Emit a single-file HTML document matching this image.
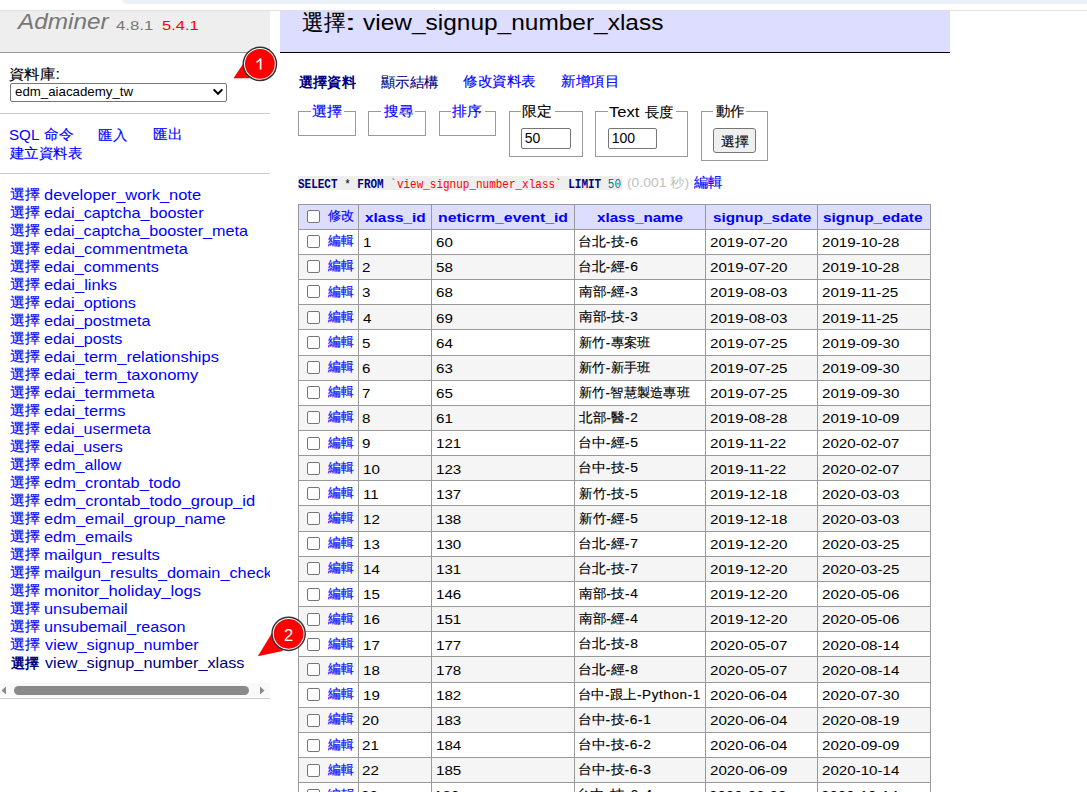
<!DOCTYPE html>
<html><head><meta charset="utf-8"><style>
html,body{margin:0;padding:0;background:#fff;width:1087px;height:792px;overflow:hidden;position:relative}
.t{position:absolute;white-space:pre;transform-origin:0 0}

</style></head><body>
<div style="position:absolute;left:122px;top:-6px;width:1100px;height:10px;background:#ecf0f9;border-radius:8px"></div>
<div style="position:absolute;left:0px;top:10px;width:1087px;height:1px;background:#dfe0df"></div>
<div style="position:absolute;left:0px;top:11px;width:270px;height:41px;background:#eee"></div>
<div style="position:absolute;left:0px;top:52px;width:270px;height:1px;background:#999"></div>
<span id="t0" class="t" style="left:17.84px;top:10.95px;font-size:22.5px;line-height:22.5px;color:#777;font-weight:normal;font-style:italic;font-family:'Liberation Sans',sans-serif;transform:scaleX(1.0824);">Adminer</span>
<span id="t1" class="t" style="left:115.66px;top:18.80px;font-size:13px;line-height:13px;color:#777;font-weight:normal;font-style:normal;font-family:'Liberation Sans',sans-serif;transform:scaleX(1.2893);">4.8.1</span>
<span id="t2" class="t" style="left:161.79px;top:18.80px;font-size:13px;line-height:13px;color:#f00;font-weight:normal;font-style:normal;font-family:'Liberation Sans',sans-serif;transform:scaleX(1.2679);">5.4.1</span>
<span id="t3" class="t" style="left:9.34px;top:66.81px;font-size:14.4px;line-height:14.4px;color:#000;font-weight:normal;font-style:normal;font-family:'Liberation Sans',sans-serif;-webkit-text-stroke:0.15px #000;transform:scaleX(1.1047);">資料庫:</span>
<div style="position:absolute;left:10px;top:83px;width:215px;height:17px;border:1px solid #767676;border-radius:2px;background:#fff"></div>
<span id="t4" class="t" style="left:15.20px;top:84.72px;font-size:13.33px;line-height:13.33px;color:#000;font-weight:normal;font-style:normal;font-family:'Liberation Sans',sans-serif;transform:scaleX(0.9966);">edm_aiacademy_tw</span>
<svg style="position:absolute;left:212px;top:88px" width="12" height="8" viewBox="0 0 12 8"><path d="M1.6 1.4 L6 5.8 L10.4 1.4" fill="none" stroke="#000" stroke-width="2"/></svg>
<div style="position:absolute;left:0px;top:113px;width:270px;height:1px;background:#ccc"></div>
<span id="t5" class="t" style="left:9.28px;top:127.30px;font-size:15px;line-height:15px;color:#00f;font-weight:normal;font-style:normal;font-family:'Liberation Sans',sans-serif;transform:scaleX(1.0107);">SQL</span>
<span id="t6" class="t" style="left:43.84px;top:127.31px;font-size:14.4px;line-height:14.4px;color:#00f;font-weight:normal;font-style:normal;font-family:'Liberation Sans',sans-serif;-webkit-text-stroke:0.15px #00f;transform:scaleX(1.0423);">命令</span>
<span id="t7" class="t" style="left:98.24px;top:128.31px;font-size:14.4px;line-height:14.4px;color:#00f;font-weight:normal;font-style:normal;font-family:'Liberation Sans',sans-serif;-webkit-text-stroke:0.15px #00f;transform:scaleX(1.0423);">匯入</span>
<span id="t8" class="t" style="left:152.76px;top:127.31px;font-size:14.4px;line-height:14.4px;color:#00f;font-weight:normal;font-style:normal;font-family:'Liberation Sans',sans-serif;-webkit-text-stroke:0.15px #00f;transform:scaleX(1.0440);">匯出</span>
<span id="t9" class="t" style="left:10.28px;top:145.71px;font-size:14.4px;line-height:14.4px;color:#00f;font-weight:normal;font-style:normal;font-family:'Liberation Sans',sans-serif;-webkit-text-stroke:0.15px #00f;transform:scaleX(1.0319);">建立資料表</span>
<div style="position:absolute;left:0px;top:173px;width:270px;height:1px;background:#ccc"></div>
<div style="position:absolute;left:0;top:174px;width:270px;height:524px;overflow:hidden">
<span id="t10" class="t" style="left:10.05px;top:13.31px;font-size:14.4px;line-height:14.4px;color:#00f;font-weight:normal;font-style:normal;font-family:'Liberation Sans',sans-serif;-webkit-text-stroke:0.15px #00f;transform:scaleX(1.0731);">選擇</span>
<span id="t11" class="t" style="left:43.70px;top:12.80px;font-size:15px;line-height:15px;color:#00f;font-weight:normal;font-style:normal;font-family:'Liberation Sans',sans-serif;transform:scaleX(1.0951);">developer_work_note</span>
<span id="t12" class="t" style="left:10.05px;top:31.31px;font-size:14.4px;line-height:14.4px;color:#00f;font-weight:normal;font-style:normal;font-family:'Liberation Sans',sans-serif;-webkit-text-stroke:0.15px #00f;transform:scaleX(1.0731);">選擇</span>
<span id="t13" class="t" style="left:43.72px;top:30.80px;font-size:15px;line-height:15px;color:#00f;font-weight:normal;font-style:normal;font-family:'Liberation Sans',sans-serif;transform:scaleX(1.0808);">edai_captcha_booster</span>
<span id="t14" class="t" style="left:10.05px;top:49.31px;font-size:14.4px;line-height:14.4px;color:#00f;font-weight:normal;font-style:normal;font-family:'Liberation Sans',sans-serif;-webkit-text-stroke:0.15px #00f;transform:scaleX(1.0731);">選擇</span>
<span id="t15" class="t" style="left:43.72px;top:48.80px;font-size:15px;line-height:15px;color:#00f;font-weight:normal;font-style:normal;font-family:'Liberation Sans',sans-serif;transform:scaleX(1.0778);">edai_captcha_booster_meta</span>
<span id="t16" class="t" style="left:10.05px;top:67.31px;font-size:14.4px;line-height:14.4px;color:#00f;font-weight:normal;font-style:normal;font-family:'Liberation Sans',sans-serif;-webkit-text-stroke:0.15px #00f;transform:scaleX(1.0731);">選擇</span>
<span id="t17" class="t" style="left:43.71px;top:66.80px;font-size:15px;line-height:15px;color:#00f;font-weight:normal;font-style:normal;font-family:'Liberation Sans',sans-serif;transform:scaleX(1.0916);">edai_commentmeta</span>
<span id="t18" class="t" style="left:10.05px;top:85.31px;font-size:14.4px;line-height:14.4px;color:#00f;font-weight:normal;font-style:normal;font-family:'Liberation Sans',sans-serif;-webkit-text-stroke:0.15px #00f;transform:scaleX(1.0731);">選擇</span>
<span id="t19" class="t" style="left:43.72px;top:84.80px;font-size:15px;line-height:15px;color:#00f;font-weight:normal;font-style:normal;font-family:'Liberation Sans',sans-serif;transform:scaleX(1.0838);">edai_comments</span>
<span id="t20" class="t" style="left:10.05px;top:103.31px;font-size:14.4px;line-height:14.4px;color:#00f;font-weight:normal;font-style:normal;font-family:'Liberation Sans',sans-serif;-webkit-text-stroke:0.15px #00f;transform:scaleX(1.0731);">選擇</span>
<span id="t21" class="t" style="left:43.71px;top:102.80px;font-size:15px;line-height:15px;color:#00f;font-weight:normal;font-style:normal;font-family:'Liberation Sans',sans-serif;transform:scaleX(1.0938);">edai_links</span>
<span id="t22" class="t" style="left:10.05px;top:121.31px;font-size:14.4px;line-height:14.4px;color:#00f;font-weight:normal;font-style:normal;font-family:'Liberation Sans',sans-serif;-webkit-text-stroke:0.15px #00f;transform:scaleX(1.0731);">選擇</span>
<span id="t23" class="t" style="left:43.72px;top:120.80px;font-size:15px;line-height:15px;color:#00f;font-weight:normal;font-style:normal;font-family:'Liberation Sans',sans-serif;transform:scaleX(1.0810);">edai_options</span>
<span id="t24" class="t" style="left:10.05px;top:139.31px;font-size:14.4px;line-height:14.4px;color:#00f;font-weight:normal;font-style:normal;font-family:'Liberation Sans',sans-serif;-webkit-text-stroke:0.15px #00f;transform:scaleX(1.0731);">選擇</span>
<span id="t25" class="t" style="left:43.72px;top:138.80px;font-size:15px;line-height:15px;color:#00f;font-weight:normal;font-style:normal;font-family:'Liberation Sans',sans-serif;transform:scaleX(1.0837);">edai_postmeta</span>
<span id="t26" class="t" style="left:10.05px;top:157.31px;font-size:14.4px;line-height:14.4px;color:#00f;font-weight:normal;font-style:normal;font-family:'Liberation Sans',sans-serif;-webkit-text-stroke:0.15px #00f;transform:scaleX(1.0731);">選擇</span>
<span id="t27" class="t" style="left:43.72px;top:156.80px;font-size:15px;line-height:15px;color:#00f;font-weight:normal;font-style:normal;font-family:'Liberation Sans',sans-serif;transform:scaleX(1.0803);">edai_posts</span>
<span id="t28" class="t" style="left:10.05px;top:175.31px;font-size:14.4px;line-height:14.4px;color:#00f;font-weight:normal;font-style:normal;font-family:'Liberation Sans',sans-serif;-webkit-text-stroke:0.15px #00f;transform:scaleX(1.0731);">選擇</span>
<span id="t29" class="t" style="left:43.70px;top:174.80px;font-size:15px;line-height:15px;color:#00f;font-weight:normal;font-style:normal;font-family:'Liberation Sans',sans-serif;transform:scaleX(1.0981);">edai_term_relationships</span>
<span id="t30" class="t" style="left:10.05px;top:193.31px;font-size:14.4px;line-height:14.4px;color:#00f;font-weight:normal;font-style:normal;font-family:'Liberation Sans',sans-serif;-webkit-text-stroke:0.15px #00f;transform:scaleX(1.0731);">選擇</span>
<span id="t31" class="t" style="left:43.70px;top:192.80px;font-size:15px;line-height:15px;color:#00f;font-weight:normal;font-style:normal;font-family:'Liberation Sans',sans-serif;transform:scaleX(1.1022);">edai_term_taxonomy</span>
<span id="t32" class="t" style="left:10.05px;top:211.31px;font-size:14.4px;line-height:14.4px;color:#00f;font-weight:normal;font-style:normal;font-family:'Liberation Sans',sans-serif;-webkit-text-stroke:0.15px #00f;transform:scaleX(1.0731);">選擇</span>
<span id="t33" class="t" style="left:43.69px;top:210.80px;font-size:15px;line-height:15px;color:#00f;font-weight:normal;font-style:normal;font-family:'Liberation Sans',sans-serif;transform:scaleX(1.1061);">edai_termmeta</span>
<span id="t34" class="t" style="left:10.05px;top:229.31px;font-size:14.4px;line-height:14.4px;color:#00f;font-weight:normal;font-style:normal;font-family:'Liberation Sans',sans-serif;-webkit-text-stroke:0.15px #00f;transform:scaleX(1.0731);">選擇</span>
<span id="t35" class="t" style="left:43.70px;top:228.80px;font-size:15px;line-height:15px;color:#00f;font-weight:normal;font-style:normal;font-family:'Liberation Sans',sans-serif;transform:scaleX(1.1000);">edai_terms</span>
<span id="t36" class="t" style="left:10.05px;top:247.31px;font-size:14.4px;line-height:14.4px;color:#00f;font-weight:normal;font-style:normal;font-family:'Liberation Sans',sans-serif;-webkit-text-stroke:0.15px #00f;transform:scaleX(1.0731);">選擇</span>
<span id="t37" class="t" style="left:43.72px;top:246.80px;font-size:15px;line-height:15px;color:#00f;font-weight:normal;font-style:normal;font-family:'Liberation Sans',sans-serif;transform:scaleX(1.0758);">edai_usermeta</span>
<span id="t38" class="t" style="left:10.05px;top:265.31px;font-size:14.4px;line-height:14.4px;color:#00f;font-weight:normal;font-style:normal;font-family:'Liberation Sans',sans-serif;-webkit-text-stroke:0.15px #00f;transform:scaleX(1.0731);">選擇</span>
<span id="t39" class="t" style="left:43.73px;top:264.80px;font-size:15px;line-height:15px;color:#00f;font-weight:normal;font-style:normal;font-family:'Liberation Sans',sans-serif;transform:scaleX(1.0722);">edai_users</span>
<span id="t40" class="t" style="left:10.05px;top:283.31px;font-size:14.4px;line-height:14.4px;color:#00f;font-weight:normal;font-style:normal;font-family:'Liberation Sans',sans-serif;-webkit-text-stroke:0.15px #00f;transform:scaleX(1.0731);">選擇</span>
<span id="t41" class="t" style="left:43.72px;top:282.80px;font-size:15px;line-height:15px;color:#00f;font-weight:normal;font-style:normal;font-family:'Liberation Sans',sans-serif;transform:scaleX(1.0775);">edm_allow</span>
<span id="t42" class="t" style="left:10.05px;top:301.31px;font-size:14.4px;line-height:14.4px;color:#00f;font-weight:normal;font-style:normal;font-family:'Liberation Sans',sans-serif;-webkit-text-stroke:0.15px #00f;transform:scaleX(1.0731);">選擇</span>
<span id="t43" class="t" style="left:43.71px;top:300.80px;font-size:15px;line-height:15px;color:#00f;font-weight:normal;font-style:normal;font-family:'Liberation Sans',sans-serif;transform:scaleX(1.0927);">edm_crontab_todo</span>
<span id="t44" class="t" style="left:10.05px;top:319.31px;font-size:14.4px;line-height:14.4px;color:#00f;font-weight:normal;font-style:normal;font-family:'Liberation Sans',sans-serif;-webkit-text-stroke:0.15px #00f;transform:scaleX(1.0731);">選擇</span>
<span id="t45" class="t" style="left:43.70px;top:318.80px;font-size:15px;line-height:15px;color:#00f;font-weight:normal;font-style:normal;font-family:'Liberation Sans',sans-serif;transform:scaleX(1.1005);">edm_crontab_todo_group_id</span>
<span id="t46" class="t" style="left:10.05px;top:337.31px;font-size:14.4px;line-height:14.4px;color:#00f;font-weight:normal;font-style:normal;font-family:'Liberation Sans',sans-serif;-webkit-text-stroke:0.15px #00f;transform:scaleX(1.0731);">選擇</span>
<span id="t47" class="t" style="left:43.71px;top:336.80px;font-size:15px;line-height:15px;color:#00f;font-weight:normal;font-style:normal;font-family:'Liberation Sans',sans-serif;transform:scaleX(1.0939);">edm_email_group_name</span>
<span id="t48" class="t" style="left:10.05px;top:355.31px;font-size:14.4px;line-height:14.4px;color:#00f;font-weight:normal;font-style:normal;font-family:'Liberation Sans',sans-serif;-webkit-text-stroke:0.15px #00f;transform:scaleX(1.0731);">選擇</span>
<span id="t49" class="t" style="left:43.71px;top:354.80px;font-size:15px;line-height:15px;color:#00f;font-weight:normal;font-style:normal;font-family:'Liberation Sans',sans-serif;transform:scaleX(1.0937);">edm_emails</span>
<span id="t50" class="t" style="left:10.05px;top:373.31px;font-size:14.4px;line-height:14.4px;color:#00f;font-weight:normal;font-style:normal;font-family:'Liberation Sans',sans-serif;-webkit-text-stroke:0.15px #00f;transform:scaleX(1.0731);">選擇</span>
<span id="t51" class="t" style="left:43.70px;top:372.80px;font-size:15px;line-height:15px;color:#00f;font-weight:normal;font-style:normal;font-family:'Liberation Sans',sans-serif;transform:scaleX(1.1029);">mailgun_results</span>
<span id="t52" class="t" style="left:10.05px;top:391.31px;font-size:14.4px;line-height:14.4px;color:#00f;font-weight:normal;font-style:normal;font-family:'Liberation Sans',sans-serif;-webkit-text-stroke:0.15px #00f;transform:scaleX(1.0731);">選擇</span>
<span id="t53" class="t" style="left:44.00px;top:390.80px;font-size:15px;line-height:15px;color:#00f;font-weight:normal;font-style:normal;font-family:'Liberation Sans',sans-serif;transform:scaleX(1.0850);">mailgun_results_domain_check</span>
<span id="t54" class="t" style="left:10.05px;top:409.31px;font-size:14.4px;line-height:14.4px;color:#00f;font-weight:normal;font-style:normal;font-family:'Liberation Sans',sans-serif;-webkit-text-stroke:0.15px #00f;transform:scaleX(1.0731);">選擇</span>
<span id="t55" class="t" style="left:43.69px;top:408.80px;font-size:15px;line-height:15px;color:#00f;font-weight:normal;font-style:normal;font-family:'Liberation Sans',sans-serif;transform:scaleX(1.1071);">monitor_holiday_logs</span>
<span id="t56" class="t" style="left:10.05px;top:427.31px;font-size:14.4px;line-height:14.4px;color:#00f;font-weight:normal;font-style:normal;font-family:'Liberation Sans',sans-serif;-webkit-text-stroke:0.15px #00f;transform:scaleX(1.0731);">選擇</span>
<span id="t57" class="t" style="left:43.71px;top:426.80px;font-size:15px;line-height:15px;color:#00f;font-weight:normal;font-style:normal;font-family:'Liberation Sans',sans-serif;transform:scaleX(1.0907);">unsubemail</span>
<span id="t58" class="t" style="left:10.05px;top:445.31px;font-size:14.4px;line-height:14.4px;color:#00f;font-weight:normal;font-style:normal;font-family:'Liberation Sans',sans-serif;-webkit-text-stroke:0.15px #00f;transform:scaleX(1.0731);">選擇</span>
<span id="t59" class="t" style="left:43.72px;top:444.80px;font-size:15px;line-height:15px;color:#00f;font-weight:normal;font-style:normal;font-family:'Liberation Sans',sans-serif;transform:scaleX(1.0806);">unsubemail_reason</span>
<span id="t60" class="t" style="left:10.05px;top:463.31px;font-size:14.4px;line-height:14.4px;color:#00f;font-weight:normal;font-style:normal;font-family:'Liberation Sans',sans-serif;-webkit-text-stroke:0.15px #00f;transform:scaleX(1.0731);">選擇</span>
<span id="t61" class="t" style="left:44.80px;top:462.80px;font-size:15px;line-height:15px;color:#00f;font-weight:normal;font-style:normal;font-family:'Liberation Sans',sans-serif;transform:scaleX(1.0838);">view_signup_number</span>
<span id="t62" class="t" style="left:11.10px;top:482.31px;font-size:14.4px;line-height:14.4px;color:#000080;font-weight:bold;font-style:normal;font-family:'Liberation Sans',sans-serif;transform:scaleX(0.9964);">選擇</span>
<span id="t63" class="t" style="left:44.80px;top:480.80px;font-size:15px;line-height:15px;color:#000080;font-weight:normal;font-style:normal;font-family:'Liberation Sans',sans-serif;transform:scaleX(1.0826);">view_signup_number_xlass</span>
<div style="position:absolute;left:0px;top:509px;width:270px;height:14px;background:#f9f9f9"></div>
<div style="position:absolute;left:14px;top:512px;width:235px;height:9px;background:#8a8a8a;border-radius:5px"></div>
<svg style="position:absolute;left:0;top:512px" width="270" height="9" viewBox="0 0 270 9"><path d="M1.5 4.5 L6 0.5 L6 8.5 Z" fill="#8a8a8a"/><path d="M264.5 4.5 L260 0.5 L260 8.5 Z" fill="#8a8a8a"/></svg>
</div>
<div style="position:absolute;left:0px;top:698px;width:270px;height:1px;background:#ccc"></div>
<div style="position:absolute;left:280px;top:11px;width:670px;height:41px;background:#ddf"></div>
<div style="position:absolute;left:280px;top:52px;width:670px;height:1px;background:#000"></div>
<span id="t64" class="t" style="left:301.52px;top:12.12px;font-size:21.6px;line-height:21.6px;color:#000;font-weight:normal;font-style:normal;font-family:'Liberation Sans',sans-serif;-webkit-text-stroke:0.15px #000;transform:scaleX(0.9833);">選擇</span>
<span id="t65" class="t" style="left:344.30px;top:11.95px;font-size:22.5px;line-height:22.5px;color:#000;font-weight:normal;font-style:normal;font-family:'Liberation Sans',sans-serif;transform:scaleX(2.0500);">:</span>
<span id="t66" class="t" style="left:362.96px;top:11.95px;font-size:22.5px;line-height:22.5px;color:#000;font-weight:normal;font-style:normal;font-family:'Liberation Sans',sans-serif;transform:scaleX(1.0869);">view_signup_number_xlass</span>
<span id="t67" class="t" style="left:298.90px;top:74.91px;font-size:14.4px;line-height:14.4px;color:#000080;font-weight:bold;font-style:normal;font-family:'Liberation Sans',sans-serif;transform:scaleX(1.0143);">選擇資料</span>
<span id="t68" class="t" style="left:381.20px;top:75.31px;font-size:14.4px;line-height:14.4px;color:#000080;font-weight:normal;font-style:normal;font-family:'Liberation Sans',sans-serif;-webkit-text-stroke:0.15px #000080;transform:scaleX(1.0232);">顯示結構</span>
<span id="t69" class="t" style="left:463.36px;top:74.31px;font-size:14.4px;line-height:14.4px;color:#00f;font-weight:normal;font-style:normal;font-family:'Liberation Sans',sans-serif;-webkit-text-stroke:0.15px #00f;transform:scaleX(1.0397);">修改資料表</span>
<span id="t70" class="t" style="left:561.30px;top:74.31px;font-size:14.4px;line-height:14.4px;color:#00f;font-weight:normal;font-style:normal;font-family:'Liberation Sans',sans-serif;-webkit-text-stroke:0.15px #00f;transform:scaleX(1.0377);">新增項目</span>
<div style="position:absolute;left:298px;top:111px;width:56px;height:23px;border:1px solid #999"></div>
<div style="position:absolute;left:310.5px;top:109px;width:33.5px;height:5px;background:#fff"></div>
<div style="position:absolute;left:368px;top:111px;width:56px;height:23px;border:1px solid #999"></div>
<div style="position:absolute;left:381px;top:109px;width:33.5px;height:5px;background:#fff"></div>
<div style="position:absolute;left:439px;top:111px;width:55px;height:23px;border:1px solid #999"></div>
<div style="position:absolute;left:450.5px;top:109px;width:34.0px;height:5px;background:#fff"></div>
<div style="position:absolute;left:509px;top:111px;width:72px;height:44px;border:1px solid #999"></div>
<div style="position:absolute;left:521px;top:109px;width:33.5px;height:5px;background:#fff"></div>
<div style="position:absolute;left:595px;top:111px;width:91px;height:44px;border:1px solid #999"></div>
<div style="position:absolute;left:608px;top:109px;width:68px;height:5px;background:#fff"></div>
<div style="position:absolute;left:701px;top:111px;width:65px;height:48px;border:1px solid #999"></div>
<div style="position:absolute;left:712.7px;top:109px;width:33.59999999999991px;height:5px;background:#fff"></div>
<span id="t71" class="t" style="left:312.12px;top:104.11px;font-size:14.4px;line-height:14.4px;color:#00f;font-weight:normal;font-style:normal;font-family:'Liberation Sans',sans-serif;-webkit-text-stroke:0.15px #00f;transform:scaleX(1.0808);">選擇</span>
<span id="t72" class="t" style="left:383.60px;top:104.11px;font-size:14.4px;line-height:14.4px;color:#00f;font-weight:normal;font-style:normal;font-family:'Liberation Sans',sans-serif;-webkit-text-stroke:0.15px #00f;transform:scaleX(1.0407);">搜尋</span>
<span id="t73" class="t" style="left:452.37px;top:104.11px;font-size:14.4px;line-height:14.4px;color:#00f;font-weight:normal;font-style:normal;font-family:'Liberation Sans',sans-serif;-webkit-text-stroke:0.15px #00f;transform:scaleX(1.0593);">排序</span>
<span id="t74" class="t" style="left:522.10px;top:103.91px;font-size:14.4px;line-height:14.4px;color:#000;font-weight:normal;font-style:normal;font-family:'Liberation Sans',sans-serif;-webkit-text-stroke:0.15px #000;transform:scaleX(1.0692);">限定</span>
<span id="t75" class="t" style="left:609.35px;top:103.80px;font-size:15px;line-height:15px;color:#000;font-weight:normal;font-style:normal;font-family:'Liberation Sans',sans-serif;transform:scaleX(1.1037);">Text</span>
<span id="t76" class="t" style="left:645.39px;top:104.71px;font-size:14.4px;line-height:14.4px;color:#000;font-weight:normal;font-style:normal;font-family:'Liberation Sans',sans-serif;-webkit-text-stroke:0.15px #000;transform:scaleX(1.0148);">長度</span>
<span id="t77" class="t" style="left:715.60px;top:103.91px;font-size:14.4px;line-height:14.4px;color:#000;font-weight:normal;font-style:normal;font-family:'Liberation Sans',sans-serif;-webkit-text-stroke:0.15px #000;transform:scaleX(1.0333);">動作</span>
<div style="position:absolute;left:521px;top:128px;width:48px;height:19px;border:1px solid #767676;border-radius:2px;background:#fff"></div>
<span id="t78" class="t" style="left:524.80px;top:131.15px;font-size:14px;line-height:14px;color:#000;font-weight:normal;font-style:normal;font-family:'Liberation Sans',sans-serif;">50</span>
<div style="position:absolute;left:608px;top:128px;width:47px;height:19px;border:1px solid #767676;border-radius:2px;background:#fff"></div>
<span id="t79" class="t" style="left:611.70px;top:131.15px;font-size:14px;line-height:14px;color:#000;font-weight:normal;font-style:normal;font-family:'Liberation Sans',sans-serif;">100</span>
<div style="position:absolute;left:713px;top:128px;width:41px;height:23px;border:1px solid #767676;border-radius:3px;background:#efefef"></div>
<span id="t80" class="t" style="left:720.63px;top:135.22px;font-size:13.33px;line-height:13.33px;color:#000;font-weight:normal;font-style:normal;font-family:'Liberation Sans',sans-serif;-webkit-text-stroke:0.15px #000;transform:scaleX(1.0667);">選擇</span>
<div style="position:absolute;left:298px;top:176px;width:324px;height:14px;background:#eee"></div>
<span id="t81" class="t" style="left:298.45px;top:178.65px;font-size:12.2px;line-height:12.2px;color:#000;font-weight:normal;font-style:normal;font-family:'Liberation Mono',monospace;transform:scaleX(0.9011);"><b style="color:#000080">SELECT</b> * <b style="color:#000080">FROM</b> <span style="color:#f00">`view_signup_number_xlass`</span> <b style="color:#000080">LIMIT</b> <span style="color:#008080">50</span></span>
<span id="t82" class="t" style="left:626.75px;top:176.63px;font-size:12.6px;line-height:12.6px;color:#c0c0c0;font-weight:normal;font-style:normal;font-family:'Liberation Sans',sans-serif;transform:scaleX(1.1018);">(0.001 秒)</span>
<span id="t83" class="t" style="left:693.99px;top:174.55px;font-size:14px;line-height:14px;color:#00f;font-weight:normal;font-style:normal;font-family:'Liberation Sans',sans-serif;-webkit-text-stroke:0.15px #00f;transform:scaleX(1.0185);">編輯</span>
<div style="position:absolute;left:299px;top:205px;width:631px;height:24px;background:#ddf"></div>
<div style="position:absolute;left:299px;top:255px;width:631px;height:24px;background:#f5f5f5"></div>
<div style="position:absolute;left:299px;top:305px;width:631px;height:24px;background:#f5f5f5"></div>
<div style="position:absolute;left:299px;top:356px;width:631px;height:24px;background:#f5f5f5"></div>
<div style="position:absolute;left:299px;top:406px;width:631px;height:24px;background:#f5f5f5"></div>
<div style="position:absolute;left:299px;top:456px;width:631px;height:24px;background:#f5f5f5"></div>
<div style="position:absolute;left:299px;top:506px;width:631px;height:25px;background:#f5f5f5"></div>
<div style="position:absolute;left:299px;top:557px;width:631px;height:24px;background:#f5f5f5"></div>
<div style="position:absolute;left:299px;top:607px;width:631px;height:24px;background:#f5f5f5"></div>
<div style="position:absolute;left:299px;top:657px;width:631px;height:25px;background:#f5f5f5"></div>
<div style="position:absolute;left:299px;top:708px;width:631px;height:24px;background:#f5f5f5"></div>
<div style="position:absolute;left:299px;top:758px;width:631px;height:24px;background:#f5f5f5"></div>
<div style="position:absolute;left:298px;top:204px;width:633px;height:1px;background:#999"></div>
<div style="position:absolute;left:298px;top:229px;width:633px;height:1px;background:#999"></div>
<div style="position:absolute;left:298px;top:254px;width:633px;height:1px;background:#999"></div>
<div style="position:absolute;left:298px;top:279px;width:633px;height:1px;background:#999"></div>
<div style="position:absolute;left:298px;top:304px;width:633px;height:1px;background:#999"></div>
<div style="position:absolute;left:298px;top:329px;width:633px;height:1px;background:#999"></div>
<div style="position:absolute;left:298px;top:355px;width:633px;height:1px;background:#999"></div>
<div style="position:absolute;left:298px;top:380px;width:633px;height:1px;background:#999"></div>
<div style="position:absolute;left:298px;top:405px;width:633px;height:1px;background:#999"></div>
<div style="position:absolute;left:298px;top:430px;width:633px;height:1px;background:#999"></div>
<div style="position:absolute;left:298px;top:455px;width:633px;height:1px;background:#999"></div>
<div style="position:absolute;left:298px;top:480px;width:633px;height:1px;background:#999"></div>
<div style="position:absolute;left:298px;top:505px;width:633px;height:1px;background:#999"></div>
<div style="position:absolute;left:298px;top:531px;width:633px;height:1px;background:#999"></div>
<div style="position:absolute;left:298px;top:556px;width:633px;height:1px;background:#999"></div>
<div style="position:absolute;left:298px;top:581px;width:633px;height:1px;background:#999"></div>
<div style="position:absolute;left:298px;top:606px;width:633px;height:1px;background:#999"></div>
<div style="position:absolute;left:298px;top:631px;width:633px;height:1px;background:#999"></div>
<div style="position:absolute;left:298px;top:656px;width:633px;height:1px;background:#999"></div>
<div style="position:absolute;left:298px;top:682px;width:633px;height:1px;background:#999"></div>
<div style="position:absolute;left:298px;top:707px;width:633px;height:1px;background:#999"></div>
<div style="position:absolute;left:298px;top:732px;width:633px;height:1px;background:#999"></div>
<div style="position:absolute;left:298px;top:757px;width:633px;height:1px;background:#999"></div>
<div style="position:absolute;left:298px;top:782px;width:633px;height:1px;background:#999"></div>
<div style="position:absolute;left:298px;top:807px;width:633px;height:1px;background:#999"></div>
<div style="position:absolute;left:298px;top:204px;width:1px;height:588px;background:#999"></div>
<div style="position:absolute;left:358px;top:204px;width:1px;height:588px;background:#999"></div>
<div style="position:absolute;left:431px;top:204px;width:1px;height:588px;background:#999"></div>
<div style="position:absolute;left:574px;top:204px;width:1px;height:588px;background:#999"></div>
<div style="position:absolute;left:705px;top:204px;width:1px;height:588px;background:#999"></div>
<div style="position:absolute;left:817px;top:204px;width:1px;height:588px;background:#999"></div>
<div style="position:absolute;left:930px;top:204px;width:1px;height:588px;background:#999"></div>
<div style="position:absolute;left:307px;top:210px;width:11px;height:11px;border:1px solid #767676;border-radius:2px;background:#fff"></div>
<span id="t84" class="t" style="left:328.00px;top:209.10px;font-size:13px;line-height:13px;color:#00f;font-weight:normal;font-style:normal;font-family:'Liberation Sans',sans-serif;-webkit-text-stroke:0.15px #00f;transform:scaleX(1.0120);">修改</span>
<span id="t85" class="t" style="left:364.52px;top:211.07px;font-size:13.5px;line-height:13.5px;color:#00f;font-weight:bold;font-style:normal;font-family:'Liberation Sans',sans-serif;transform:scaleX(1.1404);">xlass_id</span>
<span id="t86" class="t" style="left:438.20px;top:211.07px;font-size:13.5px;line-height:13.5px;color:#00f;font-weight:bold;font-style:normal;font-family:'Liberation Sans',sans-serif;transform:scaleX(1.1706);">neticrm_event_id</span>
<span id="t87" class="t" style="left:597.16px;top:211.07px;font-size:13.5px;line-height:13.5px;color:#00f;font-weight:bold;font-style:normal;font-family:'Liberation Sans',sans-serif;transform:scaleX(1.1237);">xlass_name</span>
<span id="t88" class="t" style="left:712.52px;top:211.07px;font-size:13.5px;line-height:13.5px;color:#00f;font-weight:bold;font-style:normal;font-family:'Liberation Sans',sans-serif;transform:scaleX(1.1302);">signup_sdate</span>
<span id="t89" class="t" style="left:823.44px;top:211.07px;font-size:13.5px;line-height:13.5px;color:#00f;font-weight:bold;font-style:normal;font-family:'Liberation Sans',sans-serif;transform:scaleX(1.1430);">signup_edate</span>
<div style="position:absolute;left:307px;top:235px;width:11px;height:11px;border:1px solid #767676;border-radius:2px;background:#fff"></div>
<span id="t90" class="t" style="left:328.10px;top:234.30px;font-size:13px;line-height:13px;color:#00f;font-weight:normal;font-style:normal;font-family:'Liberation Sans',sans-serif;-webkit-text-stroke:0.15px #00f;transform:scaleX(0.9808);">編輯</span>
<span id="t91" class="t" style="left:362.60px;top:236.17px;font-size:13.5px;line-height:13.5px;color:#000;font-weight:normal;font-style:normal;font-family:'Liberation Sans',sans-serif;transform:scaleX(1.1200);">1</span>
<span id="t92" class="t" style="left:435.80px;top:236.17px;font-size:13.5px;line-height:13.5px;color:#000;font-weight:normal;font-style:normal;font-family:'Liberation Sans',sans-serif;transform:scaleX(1.1200);">60</span>
<span id="t93" class="t" style="left:578.40px;top:236.02px;font-size:12.5px;line-height:12.5px;color:#000;font-weight:normal;font-style:normal;font-family:'Liberation Sans',sans-serif;-webkit-text-stroke:0.15px #000;transform:scaleX(1.0667);">台北<span style="font-size:13px;letter-spacing:0.6px">-</span>技<span style="font-size:13px;letter-spacing:0.6px">-6</span></span>
<span id="t94" class="t" style="left:710.10px;top:236.17px;font-size:13.5px;line-height:13.5px;color:#000;font-weight:normal;font-style:normal;font-family:'Liberation Sans',sans-serif;transform:scaleX(1.1200);">2019-07-20</span>
<span id="t95" class="t" style="left:821.60px;top:236.17px;font-size:13.5px;line-height:13.5px;color:#000;font-weight:normal;font-style:normal;font-family:'Liberation Sans',sans-serif;transform:scaleX(1.1200);">2019-10-28</span>
<div style="position:absolute;left:307px;top:260px;width:11px;height:11px;border:1px solid #767676;border-radius:2px;background:#fff"></div>
<span id="t96" class="t" style="left:328.10px;top:259.46px;font-size:13px;line-height:13px;color:#00f;font-weight:normal;font-style:normal;font-family:'Liberation Sans',sans-serif;-webkit-text-stroke:0.15px #00f;transform:scaleX(0.9808);">編輯</span>
<span id="t97" class="t" style="left:362.20px;top:261.32px;font-size:13.5px;line-height:13.5px;color:#000;font-weight:normal;font-style:normal;font-family:'Liberation Sans',sans-serif;transform:scaleX(1.1200);">2</span>
<span id="t98" class="t" style="left:435.80px;top:261.32px;font-size:13.5px;line-height:13.5px;color:#000;font-weight:normal;font-style:normal;font-family:'Liberation Sans',sans-serif;transform:scaleX(1.1200);">58</span>
<span id="t99" class="t" style="left:578.40px;top:261.17px;font-size:12.5px;line-height:12.5px;color:#000;font-weight:normal;font-style:normal;font-family:'Liberation Sans',sans-serif;-webkit-text-stroke:0.15px #000;transform:scaleX(1.0667);">台北<span style="font-size:13px;letter-spacing:0.6px">-</span>經<span style="font-size:13px;letter-spacing:0.6px">-6</span></span>
<span id="t100" class="t" style="left:710.10px;top:261.32px;font-size:13.5px;line-height:13.5px;color:#000;font-weight:normal;font-style:normal;font-family:'Liberation Sans',sans-serif;transform:scaleX(1.1200);">2019-07-20</span>
<span id="t101" class="t" style="left:821.60px;top:261.32px;font-size:13.5px;line-height:13.5px;color:#000;font-weight:normal;font-style:normal;font-family:'Liberation Sans',sans-serif;transform:scaleX(1.1200);">2019-10-28</span>
<div style="position:absolute;left:307px;top:285px;width:11px;height:11px;border:1px solid #767676;border-radius:2px;background:#fff"></div>
<span id="t102" class="t" style="left:328.10px;top:284.62px;font-size:13px;line-height:13px;color:#00f;font-weight:normal;font-style:normal;font-family:'Liberation Sans',sans-serif;-webkit-text-stroke:0.15px #00f;transform:scaleX(0.9808);">編輯</span>
<span id="t103" class="t" style="left:362.20px;top:286.47px;font-size:13.5px;line-height:13.5px;color:#000;font-weight:normal;font-style:normal;font-family:'Liberation Sans',sans-serif;transform:scaleX(1.1200);">3</span>
<span id="t104" class="t" style="left:435.80px;top:286.47px;font-size:13.5px;line-height:13.5px;color:#000;font-weight:normal;font-style:normal;font-family:'Liberation Sans',sans-serif;transform:scaleX(1.1200);">68</span>
<span id="t105" class="t" style="left:579.48px;top:286.32px;font-size:12.5px;line-height:12.5px;color:#000;font-weight:normal;font-style:normal;font-family:'Liberation Sans',sans-serif;-webkit-text-stroke:0.15px #000;transform:scaleX(1.0473);">南部<span style="font-size:13px;letter-spacing:0.6px">-</span>經<span style="font-size:13px;letter-spacing:0.6px">-3</span></span>
<span id="t106" class="t" style="left:710.10px;top:286.47px;font-size:13.5px;line-height:13.5px;color:#000;font-weight:normal;font-style:normal;font-family:'Liberation Sans',sans-serif;transform:scaleX(1.1200);">2019-08-03</span>
<span id="t107" class="t" style="left:821.60px;top:286.47px;font-size:13.5px;line-height:13.5px;color:#000;font-weight:normal;font-style:normal;font-family:'Liberation Sans',sans-serif;transform:scaleX(1.1200);">2019-11-25</span>
<div style="position:absolute;left:307px;top:311px;width:11px;height:11px;border:1px solid #767676;border-radius:2px;background:#fff"></div>
<span id="t108" class="t" style="left:328.10px;top:309.78px;font-size:13px;line-height:13px;color:#00f;font-weight:normal;font-style:normal;font-family:'Liberation Sans',sans-serif;-webkit-text-stroke:0.15px #00f;transform:scaleX(0.9808);">編輯</span>
<span id="t109" class="t" style="left:363.20px;top:311.62px;font-size:13.5px;line-height:13.5px;color:#000;font-weight:normal;font-style:normal;font-family:'Liberation Sans',sans-serif;transform:scaleX(1.1200);">4</span>
<span id="t110" class="t" style="left:435.80px;top:311.62px;font-size:13.5px;line-height:13.5px;color:#000;font-weight:normal;font-style:normal;font-family:'Liberation Sans',sans-serif;transform:scaleX(1.1200);">69</span>
<span id="t111" class="t" style="left:579.48px;top:311.47px;font-size:12.5px;line-height:12.5px;color:#000;font-weight:normal;font-style:normal;font-family:'Liberation Sans',sans-serif;-webkit-text-stroke:0.15px #000;transform:scaleX(1.0473);">南部<span style="font-size:13px;letter-spacing:0.6px">-</span>技<span style="font-size:13px;letter-spacing:0.6px">-3</span></span>
<span id="t112" class="t" style="left:710.10px;top:311.62px;font-size:13.5px;line-height:13.5px;color:#000;font-weight:normal;font-style:normal;font-family:'Liberation Sans',sans-serif;transform:scaleX(1.1200);">2019-08-03</span>
<span id="t113" class="t" style="left:821.60px;top:311.62px;font-size:13.5px;line-height:13.5px;color:#000;font-weight:normal;font-style:normal;font-family:'Liberation Sans',sans-serif;transform:scaleX(1.1200);">2019-11-25</span>
<div style="position:absolute;left:307px;top:336px;width:11px;height:11px;border:1px solid #767676;border-radius:2px;background:#fff"></div>
<span id="t114" class="t" style="left:328.10px;top:334.94px;font-size:13px;line-height:13px;color:#00f;font-weight:normal;font-style:normal;font-family:'Liberation Sans',sans-serif;-webkit-text-stroke:0.15px #00f;transform:scaleX(0.9808);">編輯</span>
<span id="t115" class="t" style="left:362.20px;top:336.77px;font-size:13.5px;line-height:13.5px;color:#000;font-weight:normal;font-style:normal;font-family:'Liberation Sans',sans-serif;transform:scaleX(1.1200);">5</span>
<span id="t116" class="t" style="left:435.80px;top:336.77px;font-size:13.5px;line-height:13.5px;color:#000;font-weight:normal;font-style:normal;font-family:'Liberation Sans',sans-serif;transform:scaleX(1.1200);">64</span>
<span id="t117" class="t" style="left:579.49px;top:336.62px;font-size:12.5px;line-height:12.5px;color:#000;font-weight:normal;font-style:normal;font-family:'Liberation Sans',sans-serif;-webkit-text-stroke:0.15px #000;transform:scaleX(1.0265);">新竹<span style="font-size:13px;letter-spacing:0.6px">-</span>專案班</span>
<span id="t118" class="t" style="left:710.10px;top:336.77px;font-size:13.5px;line-height:13.5px;color:#000;font-weight:normal;font-style:normal;font-family:'Liberation Sans',sans-serif;transform:scaleX(1.1200);">2019-07-25</span>
<span id="t119" class="t" style="left:821.60px;top:336.77px;font-size:13.5px;line-height:13.5px;color:#000;font-weight:normal;font-style:normal;font-family:'Liberation Sans',sans-serif;transform:scaleX(1.1200);">2019-09-30</span>
<div style="position:absolute;left:307px;top:361px;width:11px;height:11px;border:1px solid #767676;border-radius:2px;background:#fff"></div>
<span id="t120" class="t" style="left:328.10px;top:360.10px;font-size:13px;line-height:13px;color:#00f;font-weight:normal;font-style:normal;font-family:'Liberation Sans',sans-serif;-webkit-text-stroke:0.15px #00f;transform:scaleX(0.9808);">編輯</span>
<span id="t121" class="t" style="left:362.20px;top:361.92px;font-size:13.5px;line-height:13.5px;color:#000;font-weight:normal;font-style:normal;font-family:'Liberation Sans',sans-serif;transform:scaleX(1.1200);">6</span>
<span id="t122" class="t" style="left:435.80px;top:361.92px;font-size:13.5px;line-height:13.5px;color:#000;font-weight:normal;font-style:normal;font-family:'Liberation Sans',sans-serif;transform:scaleX(1.1200);">63</span>
<span id="t123" class="t" style="left:579.49px;top:361.77px;font-size:12.5px;line-height:12.5px;color:#000;font-weight:normal;font-style:normal;font-family:'Liberation Sans',sans-serif;-webkit-text-stroke:0.15px #000;transform:scaleX(1.0265);">新竹<span style="font-size:13px;letter-spacing:0.6px">-</span>新手班</span>
<span id="t124" class="t" style="left:710.10px;top:361.92px;font-size:13.5px;line-height:13.5px;color:#000;font-weight:normal;font-style:normal;font-family:'Liberation Sans',sans-serif;transform:scaleX(1.1200);">2019-07-25</span>
<span id="t125" class="t" style="left:821.60px;top:361.92px;font-size:13.5px;line-height:13.5px;color:#000;font-weight:normal;font-style:normal;font-family:'Liberation Sans',sans-serif;transform:scaleX(1.1200);">2019-09-30</span>
<div style="position:absolute;left:307px;top:386px;width:11px;height:11px;border:1px solid #767676;border-radius:2px;background:#fff"></div>
<span id="t126" class="t" style="left:328.10px;top:385.26px;font-size:13px;line-height:13px;color:#00f;font-weight:normal;font-style:normal;font-family:'Liberation Sans',sans-serif;-webkit-text-stroke:0.15px #00f;transform:scaleX(0.9808);">編輯</span>
<span id="t127" class="t" style="left:362.20px;top:387.07px;font-size:13.5px;line-height:13.5px;color:#000;font-weight:normal;font-style:normal;font-family:'Liberation Sans',sans-serif;transform:scaleX(1.1200);">7</span>
<span id="t128" class="t" style="left:435.80px;top:387.07px;font-size:13.5px;line-height:13.5px;color:#000;font-weight:normal;font-style:normal;font-family:'Liberation Sans',sans-serif;transform:scaleX(1.1200);">65</span>
<span id="t129" class="t" style="left:579.49px;top:386.92px;font-size:12.5px;line-height:12.5px;color:#000;font-weight:normal;font-style:normal;font-family:'Liberation Sans',sans-serif;-webkit-text-stroke:0.15px #000;transform:scaleX(1.0168);">新竹<span style="font-size:13px;letter-spacing:0.6px">-</span>智慧製造專班</span>
<span id="t130" class="t" style="left:710.10px;top:387.07px;font-size:13.5px;line-height:13.5px;color:#000;font-weight:normal;font-style:normal;font-family:'Liberation Sans',sans-serif;transform:scaleX(1.1200);">2019-07-25</span>
<span id="t131" class="t" style="left:821.60px;top:387.07px;font-size:13.5px;line-height:13.5px;color:#000;font-weight:normal;font-style:normal;font-family:'Liberation Sans',sans-serif;transform:scaleX(1.1200);">2019-09-30</span>
<div style="position:absolute;left:307px;top:411px;width:11px;height:11px;border:1px solid #767676;border-radius:2px;background:#fff"></div>
<span id="t132" class="t" style="left:328.10px;top:410.42px;font-size:13px;line-height:13px;color:#00f;font-weight:normal;font-style:normal;font-family:'Liberation Sans',sans-serif;-webkit-text-stroke:0.15px #00f;transform:scaleX(0.9808);">編輯</span>
<span id="t133" class="t" style="left:362.20px;top:412.22px;font-size:13.5px;line-height:13.5px;color:#000;font-weight:normal;font-style:normal;font-family:'Liberation Sans',sans-serif;transform:scaleX(1.1200);">8</span>
<span id="t134" class="t" style="left:435.80px;top:412.22px;font-size:13.5px;line-height:13.5px;color:#000;font-weight:normal;font-style:normal;font-family:'Liberation Sans',sans-serif;transform:scaleX(1.1200);">61</span>
<span id="t135" class="t" style="left:579.48px;top:412.07px;font-size:12.5px;line-height:12.5px;color:#000;font-weight:normal;font-style:normal;font-family:'Liberation Sans',sans-serif;-webkit-text-stroke:0.15px #000;transform:scaleX(1.0473);">北部<span style="font-size:13px;letter-spacing:0.6px">-</span>醫<span style="font-size:13px;letter-spacing:0.6px">-2</span></span>
<span id="t136" class="t" style="left:710.10px;top:412.22px;font-size:13.5px;line-height:13.5px;color:#000;font-weight:normal;font-style:normal;font-family:'Liberation Sans',sans-serif;transform:scaleX(1.1200);">2019-08-28</span>
<span id="t137" class="t" style="left:821.60px;top:412.22px;font-size:13.5px;line-height:13.5px;color:#000;font-weight:normal;font-style:normal;font-family:'Liberation Sans',sans-serif;transform:scaleX(1.1200);">2019-10-09</span>
<div style="position:absolute;left:307px;top:437px;width:11px;height:11px;border:1px solid #767676;border-radius:2px;background:#fff"></div>
<span id="t138" class="t" style="left:328.10px;top:435.58px;font-size:13px;line-height:13px;color:#00f;font-weight:normal;font-style:normal;font-family:'Liberation Sans',sans-serif;-webkit-text-stroke:0.15px #00f;transform:scaleX(0.9808);">編輯</span>
<span id="t139" class="t" style="left:362.20px;top:437.37px;font-size:13.5px;line-height:13.5px;color:#000;font-weight:normal;font-style:normal;font-family:'Liberation Sans',sans-serif;transform:scaleX(1.1200);">9</span>
<span id="t140" class="t" style="left:436.30px;top:437.37px;font-size:13.5px;line-height:13.5px;color:#000;font-weight:normal;font-style:normal;font-family:'Liberation Sans',sans-serif;transform:scaleX(1.1200);">121</span>
<span id="t141" class="t" style="left:578.40px;top:437.22px;font-size:12.5px;line-height:12.5px;color:#000;font-weight:normal;font-style:normal;font-family:'Liberation Sans',sans-serif;-webkit-text-stroke:0.15px #000;transform:scaleX(1.0667);">台中<span style="font-size:13px;letter-spacing:0.6px">-</span>經<span style="font-size:13px;letter-spacing:0.6px">-5</span></span>
<span id="t142" class="t" style="left:710.10px;top:437.37px;font-size:13.5px;line-height:13.5px;color:#000;font-weight:normal;font-style:normal;font-family:'Liberation Sans',sans-serif;transform:scaleX(1.1200);">2019-11-22</span>
<span id="t143" class="t" style="left:821.60px;top:437.37px;font-size:13.5px;line-height:13.5px;color:#000;font-weight:normal;font-style:normal;font-family:'Liberation Sans',sans-serif;transform:scaleX(1.1200);">2020-02-07</span>
<div style="position:absolute;left:307px;top:462px;width:11px;height:11px;border:1px solid #767676;border-radius:2px;background:#fff"></div>
<span id="t144" class="t" style="left:328.10px;top:460.74px;font-size:13px;line-height:13px;color:#00f;font-weight:normal;font-style:normal;font-family:'Liberation Sans',sans-serif;-webkit-text-stroke:0.15px #00f;transform:scaleX(0.9808);">編輯</span>
<span id="t145" class="t" style="left:362.60px;top:462.52px;font-size:13.5px;line-height:13.5px;color:#000;font-weight:normal;font-style:normal;font-family:'Liberation Sans',sans-serif;transform:scaleX(1.1200);">10</span>
<span id="t146" class="t" style="left:436.30px;top:462.52px;font-size:13.5px;line-height:13.5px;color:#000;font-weight:normal;font-style:normal;font-family:'Liberation Sans',sans-serif;transform:scaleX(1.1200);">123</span>
<span id="t147" class="t" style="left:578.40px;top:462.37px;font-size:12.5px;line-height:12.5px;color:#000;font-weight:normal;font-style:normal;font-family:'Liberation Sans',sans-serif;-webkit-text-stroke:0.15px #000;transform:scaleX(1.0667);">台中<span style="font-size:13px;letter-spacing:0.6px">-</span>技<span style="font-size:13px;letter-spacing:0.6px">-5</span></span>
<span id="t148" class="t" style="left:710.10px;top:462.52px;font-size:13.5px;line-height:13.5px;color:#000;font-weight:normal;font-style:normal;font-family:'Liberation Sans',sans-serif;transform:scaleX(1.1200);">2019-11-22</span>
<span id="t149" class="t" style="left:821.60px;top:462.52px;font-size:13.5px;line-height:13.5px;color:#000;font-weight:normal;font-style:normal;font-family:'Liberation Sans',sans-serif;transform:scaleX(1.1200);">2020-02-07</span>
<div style="position:absolute;left:307px;top:487px;width:11px;height:11px;border:1px solid #767676;border-radius:2px;background:#fff"></div>
<span id="t150" class="t" style="left:328.10px;top:485.90px;font-size:13px;line-height:13px;color:#00f;font-weight:normal;font-style:normal;font-family:'Liberation Sans',sans-serif;-webkit-text-stroke:0.15px #00f;transform:scaleX(0.9808);">編輯</span>
<span id="t151" class="t" style="left:362.60px;top:487.67px;font-size:13.5px;line-height:13.5px;color:#000;font-weight:normal;font-style:normal;font-family:'Liberation Sans',sans-serif;transform:scaleX(1.1200);">11</span>
<span id="t152" class="t" style="left:436.30px;top:487.67px;font-size:13.5px;line-height:13.5px;color:#000;font-weight:normal;font-style:normal;font-family:'Liberation Sans',sans-serif;transform:scaleX(1.1200);">137</span>
<span id="t153" class="t" style="left:579.48px;top:487.52px;font-size:12.5px;line-height:12.5px;color:#000;font-weight:normal;font-style:normal;font-family:'Liberation Sans',sans-serif;-webkit-text-stroke:0.15px #000;transform:scaleX(1.0473);">新竹<span style="font-size:13px;letter-spacing:0.6px">-</span>技<span style="font-size:13px;letter-spacing:0.6px">-5</span></span>
<span id="t154" class="t" style="left:710.10px;top:487.67px;font-size:13.5px;line-height:13.5px;color:#000;font-weight:normal;font-style:normal;font-family:'Liberation Sans',sans-serif;transform:scaleX(1.1200);">2019-12-18</span>
<span id="t155" class="t" style="left:821.60px;top:487.67px;font-size:13.5px;line-height:13.5px;color:#000;font-weight:normal;font-style:normal;font-family:'Liberation Sans',sans-serif;transform:scaleX(1.1200);">2020-03-03</span>
<div style="position:absolute;left:307px;top:512px;width:11px;height:11px;border:1px solid #767676;border-radius:2px;background:#fff"></div>
<span id="t156" class="t" style="left:328.10px;top:511.06px;font-size:13px;line-height:13px;color:#00f;font-weight:normal;font-style:normal;font-family:'Liberation Sans',sans-serif;-webkit-text-stroke:0.15px #00f;transform:scaleX(0.9808);">編輯</span>
<span id="t157" class="t" style="left:362.60px;top:512.82px;font-size:13.5px;line-height:13.5px;color:#000;font-weight:normal;font-style:normal;font-family:'Liberation Sans',sans-serif;transform:scaleX(1.1200);">12</span>
<span id="t158" class="t" style="left:436.30px;top:512.82px;font-size:13.5px;line-height:13.5px;color:#000;font-weight:normal;font-style:normal;font-family:'Liberation Sans',sans-serif;transform:scaleX(1.1200);">138</span>
<span id="t159" class="t" style="left:579.48px;top:512.67px;font-size:12.5px;line-height:12.5px;color:#000;font-weight:normal;font-style:normal;font-family:'Liberation Sans',sans-serif;-webkit-text-stroke:0.15px #000;transform:scaleX(1.0473);">新竹<span style="font-size:13px;letter-spacing:0.6px">-</span>經<span style="font-size:13px;letter-spacing:0.6px">-5</span></span>
<span id="t160" class="t" style="left:710.10px;top:512.82px;font-size:13.5px;line-height:13.5px;color:#000;font-weight:normal;font-style:normal;font-family:'Liberation Sans',sans-serif;transform:scaleX(1.1200);">2019-12-18</span>
<span id="t161" class="t" style="left:821.60px;top:512.82px;font-size:13.5px;line-height:13.5px;color:#000;font-weight:normal;font-style:normal;font-family:'Liberation Sans',sans-serif;transform:scaleX(1.1200);">2020-03-03</span>
<div style="position:absolute;left:307px;top:537px;width:11px;height:11px;border:1px solid #767676;border-radius:2px;background:#fff"></div>
<span id="t162" class="t" style="left:328.10px;top:536.22px;font-size:13px;line-height:13px;color:#00f;font-weight:normal;font-style:normal;font-family:'Liberation Sans',sans-serif;-webkit-text-stroke:0.15px #00f;transform:scaleX(0.9808);">編輯</span>
<span id="t163" class="t" style="left:362.60px;top:537.97px;font-size:13.5px;line-height:13.5px;color:#000;font-weight:normal;font-style:normal;font-family:'Liberation Sans',sans-serif;transform:scaleX(1.1200);">13</span>
<span id="t164" class="t" style="left:436.30px;top:537.97px;font-size:13.5px;line-height:13.5px;color:#000;font-weight:normal;font-style:normal;font-family:'Liberation Sans',sans-serif;transform:scaleX(1.1200);">130</span>
<span id="t165" class="t" style="left:578.40px;top:537.82px;font-size:12.5px;line-height:12.5px;color:#000;font-weight:normal;font-style:normal;font-family:'Liberation Sans',sans-serif;-webkit-text-stroke:0.15px #000;transform:scaleX(1.0667);">台北<span style="font-size:13px;letter-spacing:0.6px">-</span>經<span style="font-size:13px;letter-spacing:0.6px">-7</span></span>
<span id="t166" class="t" style="left:710.10px;top:537.97px;font-size:13.5px;line-height:13.5px;color:#000;font-weight:normal;font-style:normal;font-family:'Liberation Sans',sans-serif;transform:scaleX(1.1200);">2019-12-20</span>
<span id="t167" class="t" style="left:821.60px;top:537.97px;font-size:13.5px;line-height:13.5px;color:#000;font-weight:normal;font-style:normal;font-family:'Liberation Sans',sans-serif;transform:scaleX(1.1200);">2020-03-25</span>
<div style="position:absolute;left:307px;top:562px;width:11px;height:11px;border:1px solid #767676;border-radius:2px;background:#fff"></div>
<span id="t168" class="t" style="left:328.10px;top:561.38px;font-size:13px;line-height:13px;color:#00f;font-weight:normal;font-style:normal;font-family:'Liberation Sans',sans-serif;-webkit-text-stroke:0.15px #00f;transform:scaleX(0.9808);">編輯</span>
<span id="t169" class="t" style="left:362.60px;top:563.12px;font-size:13.5px;line-height:13.5px;color:#000;font-weight:normal;font-style:normal;font-family:'Liberation Sans',sans-serif;transform:scaleX(1.1200);">14</span>
<span id="t170" class="t" style="left:436.30px;top:563.12px;font-size:13.5px;line-height:13.5px;color:#000;font-weight:normal;font-style:normal;font-family:'Liberation Sans',sans-serif;transform:scaleX(1.1200);">131</span>
<span id="t171" class="t" style="left:578.40px;top:562.97px;font-size:12.5px;line-height:12.5px;color:#000;font-weight:normal;font-style:normal;font-family:'Liberation Sans',sans-serif;-webkit-text-stroke:0.15px #000;transform:scaleX(1.0667);">台北<span style="font-size:13px;letter-spacing:0.6px">-</span>技<span style="font-size:13px;letter-spacing:0.6px">-7</span></span>
<span id="t172" class="t" style="left:710.10px;top:563.12px;font-size:13.5px;line-height:13.5px;color:#000;font-weight:normal;font-style:normal;font-family:'Liberation Sans',sans-serif;transform:scaleX(1.1200);">2019-12-20</span>
<span id="t173" class="t" style="left:821.60px;top:563.12px;font-size:13.5px;line-height:13.5px;color:#000;font-weight:normal;font-style:normal;font-family:'Liberation Sans',sans-serif;transform:scaleX(1.1200);">2020-03-25</span>
<div style="position:absolute;left:307px;top:588px;width:11px;height:11px;border:1px solid #767676;border-radius:2px;background:#fff"></div>
<span id="t174" class="t" style="left:328.10px;top:586.54px;font-size:13px;line-height:13px;color:#00f;font-weight:normal;font-style:normal;font-family:'Liberation Sans',sans-serif;-webkit-text-stroke:0.15px #00f;transform:scaleX(0.9808);">編輯</span>
<span id="t175" class="t" style="left:362.60px;top:588.27px;font-size:13.5px;line-height:13.5px;color:#000;font-weight:normal;font-style:normal;font-family:'Liberation Sans',sans-serif;transform:scaleX(1.1200);">15</span>
<span id="t176" class="t" style="left:436.30px;top:588.27px;font-size:13.5px;line-height:13.5px;color:#000;font-weight:normal;font-style:normal;font-family:'Liberation Sans',sans-serif;transform:scaleX(1.1200);">146</span>
<span id="t177" class="t" style="left:579.48px;top:588.12px;font-size:12.5px;line-height:12.5px;color:#000;font-weight:normal;font-style:normal;font-family:'Liberation Sans',sans-serif;-webkit-text-stroke:0.15px #000;transform:scaleX(1.0473);">南部<span style="font-size:13px;letter-spacing:0.6px">-</span>技<span style="font-size:13px;letter-spacing:0.6px">-4</span></span>
<span id="t178" class="t" style="left:710.10px;top:588.27px;font-size:13.5px;line-height:13.5px;color:#000;font-weight:normal;font-style:normal;font-family:'Liberation Sans',sans-serif;transform:scaleX(1.1200);">2019-12-20</span>
<span id="t179" class="t" style="left:821.60px;top:588.27px;font-size:13.5px;line-height:13.5px;color:#000;font-weight:normal;font-style:normal;font-family:'Liberation Sans',sans-serif;transform:scaleX(1.1200);">2020-05-06</span>
<div style="position:absolute;left:307px;top:613px;width:11px;height:11px;border:1px solid #767676;border-radius:2px;background:#fff"></div>
<span id="t180" class="t" style="left:328.10px;top:611.70px;font-size:13px;line-height:13px;color:#00f;font-weight:normal;font-style:normal;font-family:'Liberation Sans',sans-serif;-webkit-text-stroke:0.15px #00f;transform:scaleX(0.9808);">編輯</span>
<span id="t181" class="t" style="left:362.60px;top:613.42px;font-size:13.5px;line-height:13.5px;color:#000;font-weight:normal;font-style:normal;font-family:'Liberation Sans',sans-serif;transform:scaleX(1.1200);">16</span>
<span id="t182" class="t" style="left:436.30px;top:613.42px;font-size:13.5px;line-height:13.5px;color:#000;font-weight:normal;font-style:normal;font-family:'Liberation Sans',sans-serif;transform:scaleX(1.1200);">151</span>
<span id="t183" class="t" style="left:579.48px;top:613.27px;font-size:12.5px;line-height:12.5px;color:#000;font-weight:normal;font-style:normal;font-family:'Liberation Sans',sans-serif;-webkit-text-stroke:0.15px #000;transform:scaleX(1.0473);">南部<span style="font-size:13px;letter-spacing:0.6px">-</span>經<span style="font-size:13px;letter-spacing:0.6px">-4</span></span>
<span id="t184" class="t" style="left:710.10px;top:613.42px;font-size:13.5px;line-height:13.5px;color:#000;font-weight:normal;font-style:normal;font-family:'Liberation Sans',sans-serif;transform:scaleX(1.1200);">2019-12-20</span>
<span id="t185" class="t" style="left:821.60px;top:613.42px;font-size:13.5px;line-height:13.5px;color:#000;font-weight:normal;font-style:normal;font-family:'Liberation Sans',sans-serif;transform:scaleX(1.1200);">2020-05-06</span>
<div style="position:absolute;left:307px;top:638px;width:11px;height:11px;border:1px solid #767676;border-radius:2px;background:#fff"></div>
<span id="t186" class="t" style="left:328.10px;top:636.86px;font-size:13px;line-height:13px;color:#00f;font-weight:normal;font-style:normal;font-family:'Liberation Sans',sans-serif;-webkit-text-stroke:0.15px #00f;transform:scaleX(0.9808);">編輯</span>
<span id="t187" class="t" style="left:362.60px;top:638.57px;font-size:13.5px;line-height:13.5px;color:#000;font-weight:normal;font-style:normal;font-family:'Liberation Sans',sans-serif;transform:scaleX(1.1200);">17</span>
<span id="t188" class="t" style="left:436.30px;top:638.57px;font-size:13.5px;line-height:13.5px;color:#000;font-weight:normal;font-style:normal;font-family:'Liberation Sans',sans-serif;transform:scaleX(1.1200);">177</span>
<span id="t189" class="t" style="left:578.40px;top:638.42px;font-size:12.5px;line-height:12.5px;color:#000;font-weight:normal;font-style:normal;font-family:'Liberation Sans',sans-serif;-webkit-text-stroke:0.15px #000;transform:scaleX(1.0667);">台北<span style="font-size:13px;letter-spacing:0.6px">-</span>技<span style="font-size:13px;letter-spacing:0.6px">-8</span></span>
<span id="t190" class="t" style="left:710.10px;top:638.57px;font-size:13.5px;line-height:13.5px;color:#000;font-weight:normal;font-style:normal;font-family:'Liberation Sans',sans-serif;transform:scaleX(1.1200);">2020-05-07</span>
<span id="t191" class="t" style="left:821.60px;top:638.57px;font-size:13.5px;line-height:13.5px;color:#000;font-weight:normal;font-style:normal;font-family:'Liberation Sans',sans-serif;transform:scaleX(1.1200);">2020-08-14</span>
<div style="position:absolute;left:307px;top:663px;width:11px;height:11px;border:1px solid #767676;border-radius:2px;background:#fff"></div>
<span id="t192" class="t" style="left:328.10px;top:662.02px;font-size:13px;line-height:13px;color:#00f;font-weight:normal;font-style:normal;font-family:'Liberation Sans',sans-serif;-webkit-text-stroke:0.15px #00f;transform:scaleX(0.9808);">編輯</span>
<span id="t193" class="t" style="left:362.60px;top:663.72px;font-size:13.5px;line-height:13.5px;color:#000;font-weight:normal;font-style:normal;font-family:'Liberation Sans',sans-serif;transform:scaleX(1.1200);">18</span>
<span id="t194" class="t" style="left:436.30px;top:663.72px;font-size:13.5px;line-height:13.5px;color:#000;font-weight:normal;font-style:normal;font-family:'Liberation Sans',sans-serif;transform:scaleX(1.1200);">178</span>
<span id="t195" class="t" style="left:578.40px;top:663.57px;font-size:12.5px;line-height:12.5px;color:#000;font-weight:normal;font-style:normal;font-family:'Liberation Sans',sans-serif;-webkit-text-stroke:0.15px #000;transform:scaleX(1.0667);">台北<span style="font-size:13px;letter-spacing:0.6px">-</span>經<span style="font-size:13px;letter-spacing:0.6px">-8</span></span>
<span id="t196" class="t" style="left:710.10px;top:663.72px;font-size:13.5px;line-height:13.5px;color:#000;font-weight:normal;font-style:normal;font-family:'Liberation Sans',sans-serif;transform:scaleX(1.1200);">2020-05-07</span>
<span id="t197" class="t" style="left:821.60px;top:663.72px;font-size:13.5px;line-height:13.5px;color:#000;font-weight:normal;font-style:normal;font-family:'Liberation Sans',sans-serif;transform:scaleX(1.1200);">2020-08-14</span>
<div style="position:absolute;left:307px;top:688px;width:11px;height:11px;border:1px solid #767676;border-radius:2px;background:#fff"></div>
<span id="t198" class="t" style="left:328.10px;top:687.18px;font-size:13px;line-height:13px;color:#00f;font-weight:normal;font-style:normal;font-family:'Liberation Sans',sans-serif;-webkit-text-stroke:0.15px #00f;transform:scaleX(0.9808);">編輯</span>
<span id="t199" class="t" style="left:362.60px;top:688.87px;font-size:13.5px;line-height:13.5px;color:#000;font-weight:normal;font-style:normal;font-family:'Liberation Sans',sans-serif;transform:scaleX(1.1200);">19</span>
<span id="t200" class="t" style="left:436.30px;top:688.87px;font-size:13.5px;line-height:13.5px;color:#000;font-weight:normal;font-style:normal;font-family:'Liberation Sans',sans-serif;transform:scaleX(1.1200);">182</span>
<span id="t201" class="t" style="left:578.45px;top:688.72px;font-size:12.5px;line-height:12.5px;color:#000;font-weight:normal;font-style:normal;font-family:'Liberation Sans',sans-serif;-webkit-text-stroke:0.15px #000;transform:scaleX(1.0353);">台中<span style="font-size:13px;letter-spacing:0.6px">-</span>跟上<span style="font-size:13px;letter-spacing:0.6px">-Python-1</span></span>
<span id="t202" class="t" style="left:710.10px;top:688.87px;font-size:13.5px;line-height:13.5px;color:#000;font-weight:normal;font-style:normal;font-family:'Liberation Sans',sans-serif;transform:scaleX(1.1200);">2020-06-04</span>
<span id="t203" class="t" style="left:821.60px;top:688.87px;font-size:13.5px;line-height:13.5px;color:#000;font-weight:normal;font-style:normal;font-family:'Liberation Sans',sans-serif;transform:scaleX(1.1200);">2020-07-30</span>
<div style="position:absolute;left:307px;top:714px;width:11px;height:11px;border:1px solid #767676;border-radius:2px;background:#fff"></div>
<span id="t204" class="t" style="left:328.10px;top:712.34px;font-size:13px;line-height:13px;color:#00f;font-weight:normal;font-style:normal;font-family:'Liberation Sans',sans-serif;-webkit-text-stroke:0.15px #00f;transform:scaleX(0.9808);">編輯</span>
<span id="t205" class="t" style="left:362.20px;top:714.02px;font-size:13.5px;line-height:13.5px;color:#000;font-weight:normal;font-style:normal;font-family:'Liberation Sans',sans-serif;transform:scaleX(1.1200);">20</span>
<span id="t206" class="t" style="left:436.30px;top:714.02px;font-size:13.5px;line-height:13.5px;color:#000;font-weight:normal;font-style:normal;font-family:'Liberation Sans',sans-serif;transform:scaleX(1.1200);">183</span>
<span id="t207" class="t" style="left:578.41px;top:713.87px;font-size:12.5px;line-height:12.5px;color:#000;font-weight:normal;font-style:normal;font-family:'Liberation Sans',sans-serif;-webkit-text-stroke:0.15px #000;transform:scaleX(1.0582);">台中<span style="font-size:13px;letter-spacing:0.6px">-</span>技<span style="font-size:13px;letter-spacing:0.6px">-6-1</span></span>
<span id="t208" class="t" style="left:710.10px;top:714.02px;font-size:13.5px;line-height:13.5px;color:#000;font-weight:normal;font-style:normal;font-family:'Liberation Sans',sans-serif;transform:scaleX(1.1200);">2020-06-04</span>
<span id="t209" class="t" style="left:821.60px;top:714.02px;font-size:13.5px;line-height:13.5px;color:#000;font-weight:normal;font-style:normal;font-family:'Liberation Sans',sans-serif;transform:scaleX(1.1200);">2020-08-19</span>
<div style="position:absolute;left:307px;top:739px;width:11px;height:11px;border:1px solid #767676;border-radius:2px;background:#fff"></div>
<span id="t210" class="t" style="left:328.10px;top:737.50px;font-size:13px;line-height:13px;color:#00f;font-weight:normal;font-style:normal;font-family:'Liberation Sans',sans-serif;-webkit-text-stroke:0.15px #00f;transform:scaleX(0.9808);">編輯</span>
<span id="t211" class="t" style="left:362.20px;top:739.17px;font-size:13.5px;line-height:13.5px;color:#000;font-weight:normal;font-style:normal;font-family:'Liberation Sans',sans-serif;transform:scaleX(1.1200);">21</span>
<span id="t212" class="t" style="left:436.30px;top:739.17px;font-size:13.5px;line-height:13.5px;color:#000;font-weight:normal;font-style:normal;font-family:'Liberation Sans',sans-serif;transform:scaleX(1.1200);">184</span>
<span id="t213" class="t" style="left:578.41px;top:739.02px;font-size:12.5px;line-height:12.5px;color:#000;font-weight:normal;font-style:normal;font-family:'Liberation Sans',sans-serif;-webkit-text-stroke:0.15px #000;transform:scaleX(1.0582);">台中<span style="font-size:13px;letter-spacing:0.6px">-</span>技<span style="font-size:13px;letter-spacing:0.6px">-6-2</span></span>
<span id="t214" class="t" style="left:710.10px;top:739.17px;font-size:13.5px;line-height:13.5px;color:#000;font-weight:normal;font-style:normal;font-family:'Liberation Sans',sans-serif;transform:scaleX(1.1200);">2020-06-04</span>
<span id="t215" class="t" style="left:821.60px;top:739.17px;font-size:13.5px;line-height:13.5px;color:#000;font-weight:normal;font-style:normal;font-family:'Liberation Sans',sans-serif;transform:scaleX(1.1200);">2020-09-09</span>
<div style="position:absolute;left:307px;top:764px;width:11px;height:11px;border:1px solid #767676;border-radius:2px;background:#fff"></div>
<span id="t216" class="t" style="left:328.10px;top:762.66px;font-size:13px;line-height:13px;color:#00f;font-weight:normal;font-style:normal;font-family:'Liberation Sans',sans-serif;-webkit-text-stroke:0.15px #00f;transform:scaleX(0.9808);">編輯</span>
<span id="t217" class="t" style="left:362.20px;top:764.32px;font-size:13.5px;line-height:13.5px;color:#000;font-weight:normal;font-style:normal;font-family:'Liberation Sans',sans-serif;transform:scaleX(1.1200);">22</span>
<span id="t218" class="t" style="left:436.30px;top:764.32px;font-size:13.5px;line-height:13.5px;color:#000;font-weight:normal;font-style:normal;font-family:'Liberation Sans',sans-serif;transform:scaleX(1.1200);">185</span>
<span id="t219" class="t" style="left:578.41px;top:764.17px;font-size:12.5px;line-height:12.5px;color:#000;font-weight:normal;font-style:normal;font-family:'Liberation Sans',sans-serif;-webkit-text-stroke:0.15px #000;transform:scaleX(1.0582);">台中<span style="font-size:13px;letter-spacing:0.6px">-</span>技<span style="font-size:13px;letter-spacing:0.6px">-6-3</span></span>
<span id="t220" class="t" style="left:710.10px;top:764.32px;font-size:13.5px;line-height:13.5px;color:#000;font-weight:normal;font-style:normal;font-family:'Liberation Sans',sans-serif;transform:scaleX(1.1200);">2020-06-09</span>
<span id="t221" class="t" style="left:821.60px;top:764.32px;font-size:13.5px;line-height:13.5px;color:#000;font-weight:normal;font-style:normal;font-family:'Liberation Sans',sans-serif;transform:scaleX(1.1200);">2020-10-14</span>
<div style="position:absolute;left:307px;top:789px;width:11px;height:11px;border:1px solid #767676;border-radius:2px;background:#fff"></div>
<span id="t222" class="t" style="left:327.04px;top:787.82px;font-size:13px;line-height:13px;color:#00f;font-weight:normal;font-style:normal;font-family:'Liberation Sans',sans-serif;-webkit-text-stroke:0.15px #00f;transform:scaleX(1.0625);">編輯</span>
<span id="t223" class="t" style="left:361.20px;top:789.47px;font-size:13.5px;line-height:13.5px;color:#000;font-weight:normal;font-style:normal;font-family:'Liberation Sans',sans-serif;transform:scaleX(1.1200);">23</span>
<span id="t224" class="t" style="left:434.30px;top:789.47px;font-size:13.5px;line-height:13.5px;color:#000;font-weight:normal;font-style:normal;font-family:'Liberation Sans',sans-serif;transform:scaleX(1.1200);">186</span>
<span id="t225" class="t" style="left:576.12px;top:789.32px;font-size:12.5px;line-height:12.5px;color:#000;font-weight:normal;font-style:normal;font-family:'Liberation Sans',sans-serif;-webkit-text-stroke:0.15px #000;transform:scaleX(1.1078);">台中<span style="font-size:13px;letter-spacing:0.6px">-</span>技<span style="font-size:13px;letter-spacing:0.6px">-6-4</span></span>
<span id="t226" class="t" style="left:709.10px;top:789.47px;font-size:13.5px;line-height:13.5px;color:#000;font-weight:normal;font-style:normal;font-family:'Liberation Sans',sans-serif;transform:scaleX(1.1200);">2020-06-09</span>
<span id="t227" class="t" style="left:820.60px;top:789.47px;font-size:13.5px;line-height:13.5px;color:#000;font-weight:normal;font-style:normal;font-family:'Liberation Sans',sans-serif;transform:scaleX(1.1200);">2020-10-14</span>
<svg style="position:absolute;left:0;top:0" width="1087" height="792" viewBox="0 0 1087 792">
<path d="M233.5 78.3 L243 64 L252 66 L249.5 78.3 Z" fill="#f00"/>
<circle cx="259.9" cy="63.9" r="15.6" fill="#f00" stroke="#fff" stroke-width="1.4"/>
<circle cx="259.9" cy="63.9" r="16.6" fill="none" stroke="#333" stroke-width="1.5"/>
<path d="M257.8 656.3 L272 633 L284 642 L282.5 651 Z" fill="#f00"/>
<circle cx="288.6" cy="633.8" r="15.6" fill="#f00" stroke="#fff" stroke-width="1.4"/>
<circle cx="288.6" cy="633.8" r="16.6" fill="none" stroke="#333" stroke-width="1.5"/>
</svg>
<svg style="position:absolute;left:0;top:0" width="300" height="100" viewBox="0 0 300 100"><path d="M260.6 58.6 L260.6 69.6" stroke="#fff" stroke-width="1.7" fill="none"/><path d="M260.6 58.8 Q258.8 61.2 256.4 62.2" stroke="#fff" stroke-width="1.5" fill="none"/></svg>
<span id="t228" class="t" style="left:283.97px;top:627.56px;font-size:16px;line-height:16px;color:#fff;font-weight:normal;font-style:normal;font-family:'Liberation Sans',sans-serif;transform:scaleX(1.0375);">2</span>
</body></html>
